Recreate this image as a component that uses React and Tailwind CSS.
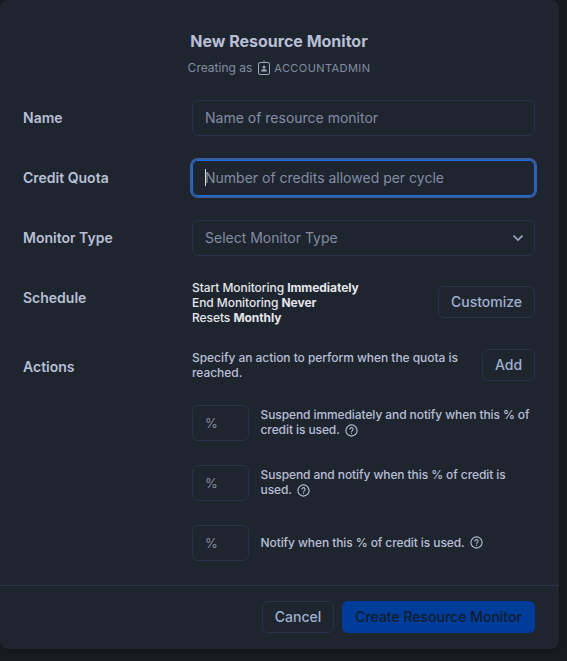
import React from "react";

function HelpIcon() {
  return (
    <svg className="-my-1 ml-[2px] inline-block h-[13px] w-[13px] align-[1.5px]" viewBox="0 0 13 13" fill="none" stroke="currentColor">
      <circle cx="6.5" cy="6.5" r="5.6" strokeWidth="1.1" />
      <path d="M4.9 5.4a1.6 1.6 0 1 1 2.5 1.2c-.6.4-.9.6-.9 1.2" strokeWidth="1.1" />
      <path d="M6.5 8.6v1.2" strokeWidth="1.1" />
    </svg>
  );
}

function RoleIcon() {
  return (
    <svg className="h-[15px] w-3" viewBox="0 0 12 15" fill="none" stroke="currentColor">
      <rect x="0.5" y="2.5" width="11" height="12" rx="1.5" />
      <path d="M6 0.5v2" />
      <circle cx="6" cy="7" r="1.5" fill="currentColor" stroke="none" />
      <path d="M3 11.5c0-1.6 1.2-2.5 3-2.5s3 .9 3 2.5z" fill="currentColor" stroke="none" />
    </svg>
  );
}

function Row({ label, children, className = "h-9 mb-6" }) {
  return (
    <div className={"flex " + className}>
      <div className="w-[169px] shrink-0 text-[14px] leading-9 font-semibold text-[#b8bfd6]">{label}</div>
      {children}
    </div>
  );
}

const field = "flex h-9 w-[343px] items-center rounded-[6px] border px-3 pb-px text-[14px] text-[#838ca4]";
const button = "flex h-8 shrink-0 items-center justify-center rounded-[6px] border border-[#2b3149] pb-px text-[14px] font-medium text-[#9fb1cf]";

function ActionRow({ children }) {
  return (
    <div className="mb-6 flex h-9 items-center">
      <div className="flex h-9 w-[57px] shrink-0 items-center rounded-[6px] border border-[#2b3149] px-3 pt-px text-[13px] text-[#838ca4]">%</div>
      <p className="-mt-[2px] ml-[11.5px] w-[275px] text-[12px] leading-[15px] font-medium tracking-[-0.09px] text-[#b8bfd6]">
        {children} <HelpIcon />
      </p>
    </div>
  );
}

export default function App() {
  return (
    <div className="h-[661px] w-[567px] overflow-hidden bg-[#191c21] font-['Inter',sans-serif]">
      <div className="flex h-[649px] w-[559px] flex-col rounded-[8px] bg-[#1f252f] shadow-[0_0_12px_rgba(0,0,0,0.4)]">
        <header className="flex h-[100px] flex-col items-center pt-[31px] pr-px">
          <h1 className="text-[16px] leading-5 font-bold text-[#b8bfd6]">New Resource Monitor</h1>
          <div className="mt-[9px] flex h-4 items-center text-[12px] text-[#838ca4]">
            <span>Creating as</span>
            <span className="mr-1 mb-[2px] ml-[6px] text-[#9ba5c0]"><RoleIcon /></span>
            <span className="text-[11px] tracking-[0.42px]">ACCOUNTADMIN</span>
          </div>
        </header>
        <main className="h-[485px] pl-[23px]">
          <Row label="Name">
            <div className={field + " border-[#2b3149]"}>Name of resource monitor</div>
          </Row>
          <Row label="Credit Quota">
            <div className={field + " border-[#1a6ce7] shadow-[0_0_0_2px_#365f9f]"}>
              <span className="-mr-px h-[17px] w-px bg-[#d5d9e4]" />
              Number of credits allowed per cycle
            </div>
          </Row>
          <Row label="Monitor Type">
            <div className={field + " justify-between border-[#2b3149]"}>
              Select Monitor Type
              <svg className="-mr-[1px] h-[10px] w-[10px]" viewBox="0 0 10 10" fill="none" stroke="#9ba5c0" strokeWidth="1.7">
                <path d="M0.5 2.5L5 7l4.5-4.5" />
              </svg>
            </div>
          </Row>
          <Row label="Schedule" className="h-[69px]">
            <p className="w-[246px] text-[12px] leading-[15px] font-medium tracking-[-0.06px] text-[#e4e6eb]">
              Start Monitoring <b>Immediately</b><br />
              End Monitoring <b>Never</b><br />
              Resets <b>Monthly</b>
            </p>
            <div className={button + " mt-[6px] w-[97px]"}>Customize</div>
          </Row>
          <Row label="Actions" className="h-[56px]">
            <p className="mt-[1px] w-[290px] pr-4 text-[12px] leading-[15px] font-medium tracking-[-0.05px] text-[#b8bfd6]">
              Specify an action to perform when the quota is reached.
            </p>
            <div className={button + " w-[53px]"}>Add</div>
          </Row>
          <div className="ml-[169px]">
            <ActionRow>Suspend immediately and notify when this % of credit is used.</ActionRow>
            <ActionRow>Suspend and notify when this % of credit is used.</ActionRow>
            <ActionRow>Notify when this % of credit is used.</ActionRow>
          </div>
        </main>
        <footer className="flex h-16 gap-2 border-t border-[#2b3149] pt-[15px] pl-[262px]">
          <div className={button + " w-[72px]"}>Cancel</div>
          <div className="flex h-8 w-[193px] items-center justify-center rounded-[6px] bg-[#003d9b] pb-px text-[14px] font-medium text-[#131c29]">Create Resource Monitor</div>
        </footer>
      </div>
    </div>
  );
}
